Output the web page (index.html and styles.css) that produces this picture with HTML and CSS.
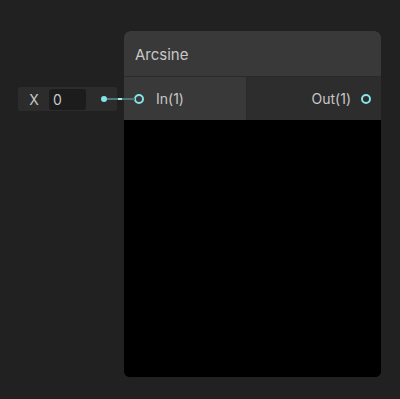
FILE: index.html
```
<!DOCTYPE html>
<html lang="en">
  <head>
    <meta charset="UTF-8" />
    <title>Arcsine node</title>
    <link rel="stylesheet" href="styles.css">
  </head>
  <body>
    <div class="graph">
      <!-- inline value feeding the input port -->
      <div class="inline-field">
        <span class="label">X</span>
        <span class="value">0</span>
        <span class="dot"></span>
        <span class="wire"><span class="wire-mark"></span></span>
      </div>

      <section class="node">
        <header class="title">Arcsine</header>
        <div class="ports">
          <div class="port in">
            <span class="socket"></span>
            <span>In(1)</span>
          </div>
          <div class="port out">
            <span>Out(1)</span>
            <span class="socket"></span>
          </div>
        </div>
        <div class="preview"></div>
      </section>
    </div>
  </body>
</html>
```

FILE: styles.css
```
:root {
  --bg: #212121;
  --header: #393939;
  --port-in: #393939;
  --port-out: #2d2d2d;
  --text: #c8c8c8;
  --teal: #84e4e7;
  --font: Inter, "Noto Sans", sans-serif;
}

* {
  box-sizing: border-box;
}

html,
body {
  margin: 0;
  height: 100%;
  background: var(--bg);
  font-family: var(--font);
  color: var(--text);
}

.graph {
  display: flex;
  align-items: flex-start;
  padding: 31px 0 0 18px;
}

.inline-field {
  position: relative;
  display: flex;
  align-items: center;
  width: 99px;
  height: 24px;
  margin: 56px 7px 0 0;
  background: #2c2c2c;
  border-radius: 2px;
  font-size: 14px;
}

.inline-field .label {
  width: 31px;
  text-align: center;
  padding-left: 1px;
}

.inline-field .value {
  width: 37px;
  height: 21px;
  line-height: 21px;
  padding-left: 4px;
  background: #1c1c1c;
  border-radius: 3px;
}

.inline-field .dot {
  width: 6px;
  height: 6px;
  margin-left: 15px;
  border-radius: 50%;
  background: var(--teal);
}

/* connector going over the node edge to the socket */
.wire {
  position: absolute;
  left: 89px;
  top: 11px;
  width: 28px;
  height: 2px;
  background: #4d7778;
}

.wire-mark {
  position: absolute;
  left: 11px;
  top: 0;
  width: 4px;
  height: 2px;
  background: #a8e6e8;
}

.node {
  width: 257px;
  border-radius: 6px;
  overflow: hidden;
  background: #000;
}

.title {
  height: 46px;
  padding: 14px 0 0 11px;
  background: var(--header);
  font-size: 15px;
  border-bottom: 1px solid #2a2a2a;
}

.ports {
  display: flex;
  height: 43px;
  font-size: 14px;
}

.port {
  display: flex;
  align-items: center;
}

.port.in {
  width: 123px;
  padding-left: 10px;
  gap: 12px;
  background: var(--port-in);
  border-right: 1px solid #2a2a2a;
}

.port.out {
  flex: 1;
  justify-content: flex-end;
  padding-right: 10px;
  gap: 10px;
  background: var(--port-out);
}

.socket {
  width: 10px;
  height: 10px;
  border: 2px solid var(--teal);
  border-radius: 50%;
}

.preview {
  height: 257px;
  background: #000;
}
```
